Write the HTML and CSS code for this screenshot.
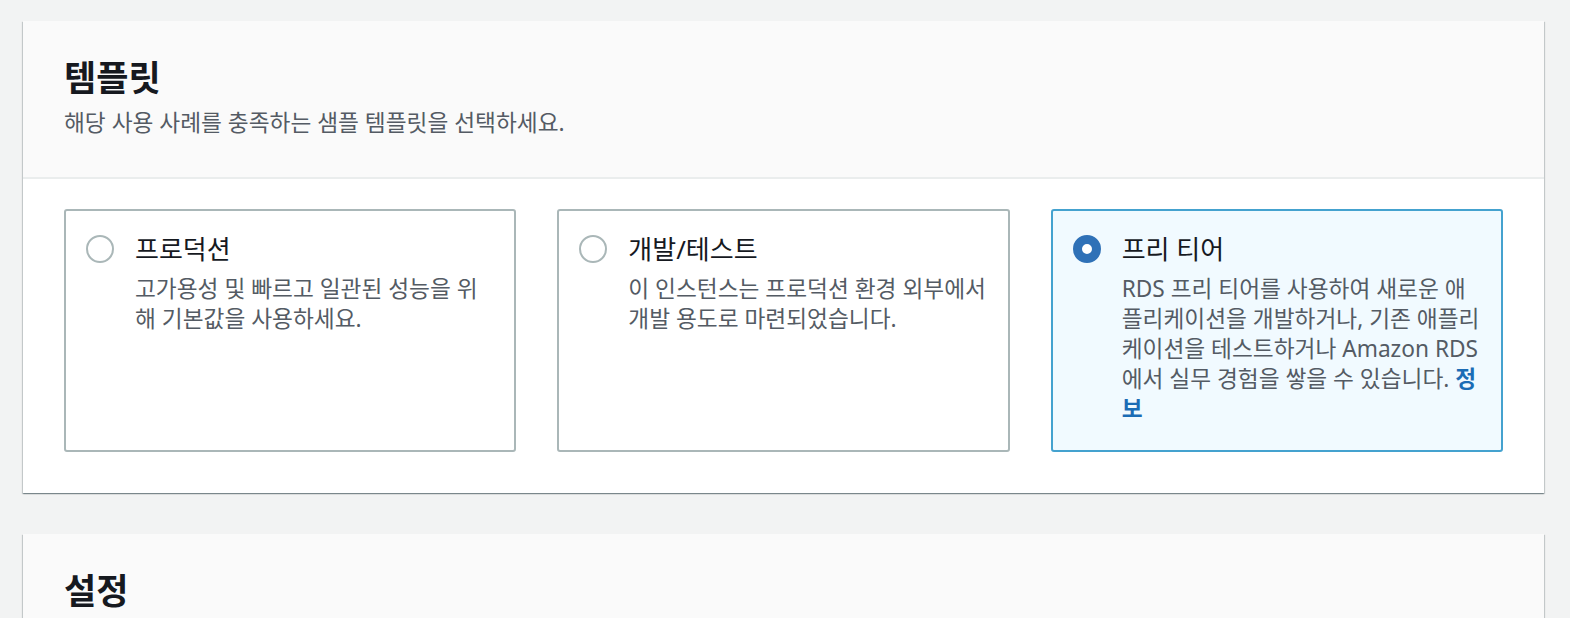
FILE: index.html
```html
<!DOCTYPE html>
<html lang="ko">
<head>
<meta charset="utf-8">
<title>템플릿</title>
<link rel="stylesheet" href="styles.css">
</head>
<body>
<main class="page">
  <section class="panel">
    <header class="panel-header">
      <h2 class="panel-title">템플릿</h2>
      <p class="panel-desc">해당 사용 사례를 충족하는 샘플 템플릿을 선택하세요.</p>
    </header>
    <div class="panel-body">
      <div class="tiles">
        <label class="tile">
          <span class="radio"></span>
          <span class="tile-text">
            <span class="tile-title">프로덕션</span>
            <span class="tile-desc">고가용성 및 빠르고 일관된 성능을 위해 기본값을 사용하세요.</span>
          </span>
        </label>
        <label class="tile">
          <span class="radio"></span>
          <span class="tile-text">
            <span class="tile-title">개발/테스트</span>
            <span class="tile-desc">이 인스턴스는 프로덕션 환경 외부에서 개발 용도로 마련되었습니다.</span>
          </span>
        </label>
        <label class="tile tile-selected">
          <span class="radio radio-checked"></span>
          <span class="tile-text">
            <span class="tile-title">프리 티어</span>
            <span class="tile-desc">RDS 프리 티어를 사용하여 새로운 애플리케이션을 개발하거나, 기존 애플리케이션을 테스트하거나 Amazon RDS에서 실무 경험을 쌓을 수 있습니다. <a class="info-link" href="#">정보</a></span>
          </span>
        </label>
      </div>
    </div>
  </section>
  <section class="panel panel-next">
    <header class="panel-header">
      <h2 class="panel-title">설정</h2>
    </header>
  </section>
</main>
</body>
</html>
```

FILE: styles.css
```css
html {
  overflow: hidden;
}

body {
  margin: 0;
  background: #f2f3f3;
  font-family: "Noto Sans", "Noto Sans CJK KR", sans-serif;
  color: #16191f;
}

.page {
  padding: 21px 26px 0 23px;
}

.panel {
  background: #ffffff;
  box-shadow: 0 1px 1px 0 rgba(0, 28, 36, 0.3), 1px 1px 1px 0 rgba(0, 28, 36, 0.15), -1px 1px 1px 0 rgba(0, 28, 36, 0.15);
}

.panel-next {
  margin-top: 41px;
}

.panel-header {
  background: #fafafa;
  border-bottom: 2px solid #eaeded;
  padding: 35px 41px 39px 41px;
}

.panel-title {
  margin: 0;
  font-size: 35px;
  line-height: 44px;
  font-weight: 700;
  color: #16191f;
}

.panel-desc {
  margin: 8px 0 0 0;
  font-size: 22.7px;
  line-height: 30px;
  color: #545b64;
}

.panel-body {
  padding: 30px 41px 41px 41px;
}

.tiles {
  display: grid;
  grid-template-columns: repeat(3, 1fr);
  gap: 41px;
}

.tile {
  display: flex;
  align-items: flex-start;
  gap: 21px;
  border: 2px solid #aab7b8;
  border-radius: 3px;
  padding: 23px 19px 26px 20px;
  background: #ffffff;
}

.tile-selected {
  border-color: #44a2cf;
  background: #f1faff;
}

.radio {
  flex: none;
  box-sizing: border-box;
  width: 28px;
  height: 28px;
  margin-top: 1px;
  border: 2px solid #aab7b8;
  border-radius: 50%;
  background: #ffffff;
}

.radio-checked {
  border: 9px solid #2f71b7;
}

.tile-text {
  flex: 1;
  min-width: 0;
  display: flex;
  flex-direction: column;
}

.tile-title {
  font-size: 26px;
  line-height: 30px;
  color: #16191f;
}

.tile-desc {
  margin-top: 10px;
  font-size: 22.7px;
  line-height: 30px;
  color: #545b64;
}

.info-link {
  color: #1b6cb5;
  font-weight: 700;
  text-decoration: none;
}
```
